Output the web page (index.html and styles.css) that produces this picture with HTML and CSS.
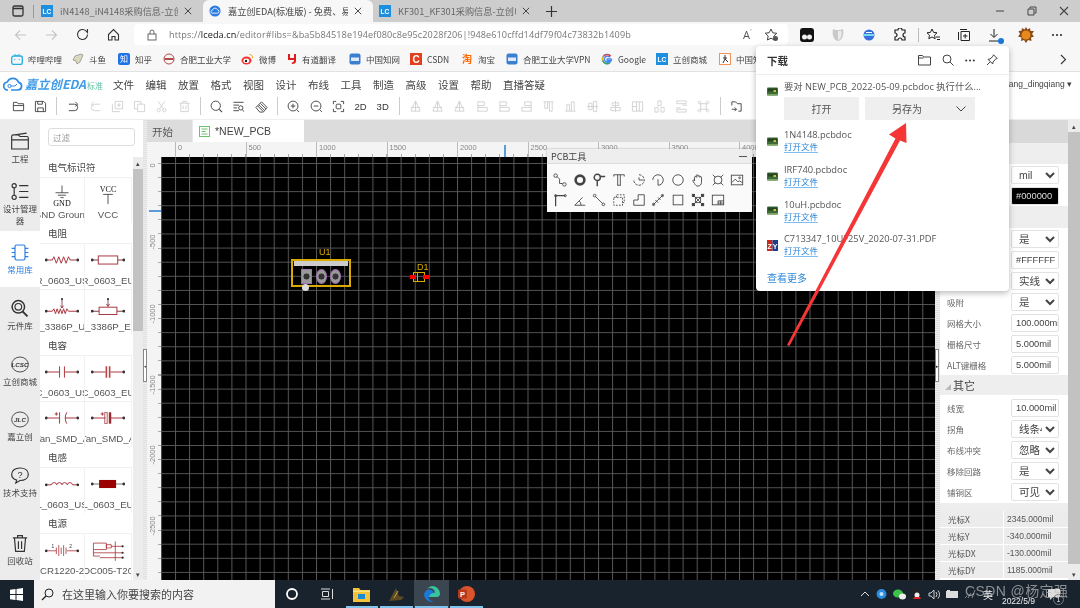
FILE: index.html
```html
<!DOCTYPE html>
<html lang="zh-CN">
<head>
<meta charset="utf-8">
<title>嘉立创EDA(标准版)</title>
<link rel="stylesheet" href="styles.css">
</head>
<body>
<svg class="defs" width="0" height="0" aria-hidden="true">
  <symbol id="i-close" viewBox="0 0 10 10"><path d="M1 1l8 8M9 1l-8 8" fill="none" stroke="currentColor" stroke-width="1.1"/></symbol>
  <symbol id="i-lc" viewBox="0 0 12 12"><rect width="12" height="12" fill="#1e8fe0"/><text x="6" y="8.6" font-size="6.6" font-weight="700" text-anchor="middle" fill="#fff" font-family="Liberation Sans">LC</text></symbol>
  <symbol id="i-cnki" viewBox="0 0 12 12"><rect x="0.5" y="0.5" width="11" height="11" rx="2" fill="#3b7fd0"/><rect x="2" y="4.5" width="8" height="3.5" fill="#dfeafa"/></symbol>
  <symbol id="i-pcb" viewBox="0 0 11 11"><rect y="1.5" width="11" height="8" rx="1" fill="#3d6b3a"/><rect x="1" y="2.5" width="9" height="3" fill="#23451f"/><rect x="6.5" y="4" width="2.5" height="2" fill="#d8b93a"/><rect y="8" width="11" height="1.5" fill="#7ba35f"/></symbol>
  <symbol id="b-open" viewBox="0 0 14 14"><path d="M1.5 11.5v-9h4l1 1.5h6v7.5zM1.5 6h11" fill="none" stroke="currentColor"/></symbol>
  <symbol id="b-save" viewBox="0 0 14 14"><path d="M1.5 1.5h9l2 2v9h-11zM4 1.5v3h5v-3M4 12.5v-4h6v4" fill="none" stroke="currentColor"/></symbol>
  <symbol id="b-undo" viewBox="0 0 14 14"><path d="M12 11.5H6a3.5 3.5 0 0 1 0-7h6M2.5 4.500L5 2M2.5 4.500L5 7" fill="none" stroke="currentColor" transform="matrix(-1 0 0 1 14 0)"/></symbol>
  <symbol id="b-redo" viewBox="0 0 14 14"><path d="M12 11.5H6a3.5 3.5 0 0 1 0-7h6M2.5 4.500L5 2M2.5 4.500L5 7" fill="none" stroke="currentColor"/></symbol>
  <symbol id="b-copy" viewBox="0 0 14 14"><path d="M4.5 1.5h8v8h-8zM1.5 4.5v8h8M8.5 3.5v4M6.5 5.5h4" fill="none" stroke="currentColor"/></symbol>
  <symbol id="b-paste" viewBox="0 0 14 14"><path d="M1.5 1.5h7v3M1.5 1.5v8h3M5 4.5h7.5v8H5z" fill="none" stroke="currentColor"/></symbol>
  <symbol id="b-cut" viewBox="0 0 14 14"><circle cx="4" cy="11" r="1.8" fill="none" stroke="currentColor"/><circle cx="10" cy="11" r="1.8" fill="none" stroke="currentColor"/><path d="M5 9.5L10.5 1.5M9 9.5L3.5 1.5" fill="none" stroke="currentColor"/></symbol>
  <symbol id="b-trash" viewBox="0 0 14 14"><path d="M1.5 3.5h11M5 3.5v-2h4v2M3 3.5v9h8v-9M5.5 6v4M8.5 6v4" fill="none" stroke="currentColor"/></symbol>
  <symbol id="b-search" viewBox="0 0 14 14"><circle cx="6.2" cy="6.2" r="5" fill="none" stroke="currentColor"/><path d="M10 10l3 3" stroke="currentColor" stroke-width="1.2"/></symbol>
  <symbol id="b-find" viewBox="0 0 14 14"><path d="M1.5 2.5h11M1.5 5.5h6M1.5 8.5h4M1.5 11.5h6" stroke="currentColor"/><circle cx="9.5" cy="8.5" r="2.3" fill="none" stroke="currentColor"/><path d="M11 10.5l2 2" stroke="currentColor"/></symbol>
  <symbol id="b-erase" viewBox="0 0 14 14"><path d="M1 8l6-6 6 6-4 5H5zM4 5l6 6M6 3.8l6 6M2.8 6.300l6 6" fill="none" stroke="currentColor"/></symbol>
  <symbol id="b-zin" viewBox="0 0 14 14"><circle cx="6.5" cy="6.5" r="5.3" fill="none" stroke="currentColor"/><path d="M10.5 10.5l2.5 2.5M4 6.5h5M6.5 4v5" stroke="currentColor"/></symbol>
  <symbol id="b-zout" viewBox="0 0 14 14"><circle cx="6.5" cy="6.5" r="5.3" fill="none" stroke="currentColor"/><path d="M10.5 10.5l2.5 2.5M4 6.5h5" stroke="currentColor"/></symbol>
  <symbol id="b-fit" viewBox="0 0 14 14"><path d="M1.5 4.5v-3h3M9.5 1.5h3v3M12.5 9.5v3h-3M4.5 12.5h-3v-3" fill="none" stroke="currentColor"/><rect x="4.5" y="4.5" width="5" height="5" rx="1" fill="none" stroke="currentColor"/></symbol>
  <symbol id="b-a1" viewBox="0 0 14 14"><path d="M7 1L2 12h10zM2 8h10M7 1v11" fill="none" stroke="currentColor"/></symbol>
  <symbol id="b-a2" viewBox="0 0 14 14"><path d="M2 1.5v11M2 2h7v4H2M2 8h10v4H2" fill="none" stroke="currentColor"/></symbol>
  <symbol id="b-a3" viewBox="0 0 14 14"><path d="M12 1.5v11M12 2H5v4h7M12 8H2v4h10" fill="none" stroke="currentColor"/></symbol>
  <symbol id="b-a4" viewBox="0 0 14 14"><path d="M1.5 2h11M3 2v7h3V2M8 2v10h3V2" fill="none" stroke="currentColor"/></symbol>
  <symbol id="b-a5" viewBox="0 0 14 14"><path d="M1.5 12h11M3 12V5h3v7M8 12V2h3v10" fill="none" stroke="currentColor"/></symbol>
  <symbol id="b-a6" viewBox="0 0 14 14"><path d="M1 7h12M3 3.500h3.500v7H3zM8 1.500h3.500v11H8z" fill="none" stroke="currentColor"/></symbol>
  <symbol id="b-a7" viewBox="0 0 14 14"><path d="M7 1v12M3.500 3h7v3h-7zM2 8h10v3.500H2z" fill="none" stroke="currentColor"/></symbol>
  <symbol id="b-a8" viewBox="0 0 14 14"><path d="M1.500 2h11v10h-11zM6 2v10M1.500 7H6M9 2v10" fill="none" stroke="currentColor"/></symbol>
  <symbol id="b-a9" viewBox="0 0 14 14"><path d="M2 8h3.500v5H2zM8.500 8H12v5H8.500zM5.200 1h3.500v5H5.200z" fill="none" stroke="currentColor"/></symbol>
  <symbol id="b-a10" viewBox="0 0 14 14"><path d="M2 1h10v3H2zM2 10h10v3H2zM8 5.500h5M1 8.500h5" fill="none" stroke="currentColor"/></symbol>
  <symbol id="b-a11" viewBox="0 0 14 14"><path d="M4 4h6v6H4zM4 4H2a1.500 1.500 0 1 1 2-2zM10 4V2a1.500 1.500 0 1 1 2 2zM4 10v2a1.500 1.500 0 1 1-2-2zM10 10h2a1.500 1.500 0 1 1-2 2z" fill="none" stroke="currentColor"/></symbol>
  <symbol id="b-a12" viewBox="0 0 14 14"><path d="M2 6V2h4l2 2h4v8H9M2 10h5M7 10l-2-2M7 10l-2 2" fill="none" stroke="currentColor"/></symbol>
  <symbol id="s-res" viewBox="0 0 42 14"><path d="M0 7h9l2-4 3 8 3-8 3 8 3-8 3 8 3-8 2 4h11" fill="none" stroke="#a8343c" stroke-width="1.200"/><circle cx="1.500" cy="7" r="1.700" fill="#333"/><circle cx="40.500" cy="7" r="1.700" fill="#333"/></symbol>
  <symbol id="s-rbox" viewBox="0 0 42 14"><path d="M0 7h9M33 7h9" stroke="#7a3a3e" stroke-width="1.200"/><rect x="9" y="2" width="24" height="10" fill="none" stroke="#a8343c" stroke-width="1.200"/><circle cx="1.500" cy="7" r="1.700" fill="#333"/><circle cx="40.500" cy="7" r="1.700" fill="#333"/></symbol>
</svg>

<div class="screen">
  <div class="tabstrip">
    <span class="strip-btn"><svg width="12" height="12" viewBox="0 0 12 12"><path d="M1 2.500A1.500 1.500 0 0 1 2.500 1h7A1.500 1.500 0 0 1 11 2.500v7A1.500 1.500 0 0 1 9.500 11h-7A1.500 1.500 0 0 1 1 9.500zM1 3.500h10" fill="none" stroke="#333" stroke-width="1.300"/></svg></span>
    <span class="strip-sep"></span>
    <div class="btab"><svg class="fav"><use href="#i-lc"/></svg><span class="btab-t">iN4148_iN4148采购信息-立创电子</span><svg class="x"><use href="#i-close"/></svg></div>
    <div class="btab active"><svg class="fav" viewBox="0 0 14 14"><circle cx="7" cy="7" r="6.500" fill="#2c7be5"/><path d="M3.500 9.500h6a2 2 0 0 0 .3-4 3 3 0 0 0-5.700.5 1.800 1.800 0 0 0-.6 3.500z" fill="none" stroke="#fff"/></svg><span class="btab-t">嘉立创EDA(标准版) - 免费、易用</span><svg class="x"><use href="#i-close"/></svg></div>
    <div class="btab"><svg class="fav"><use href="#i-lc"/></svg><span class="btab-t">KF301_KF301采购信息-立创电子</span><svg class="x"><use href="#i-close"/></svg></div>
    <svg class="plus" width="11" height="11" viewBox="0 0 11 11"><path d="M5.500 0v11M0 5.500h11" stroke="#333" stroke-width="1.200"/></svg>
    <div class="winctl">
      <svg width="10" height="10" viewBox="0 0 10 10"><path d="M1 5h8" stroke="#444"/></svg>
      <svg width="10" height="10" viewBox="0 0 10 10"><path d="M3 2.500V1h6v6H7.500M1 3h6v6H1z" fill="none" stroke="#444"/></svg>
      <svg width="10" height="10" viewBox="0 0 10 10"><use href="#i-close" color="#444"/></svg>
    </div>
  </div>

  <div class="addr">
    <div class="nav-ic">
      <svg width="13" height="12" viewBox="0 0 13 12"><path d="M12 6H1.500M6 1.500L1.500 6 6 10.500" fill="none" stroke="#c4c4c4" stroke-width="1.100"/></svg>
      <svg width="13" height="12" viewBox="0 0 13 12"><path d="M1 6h10.500M7 1.500L11.500 6 7 10.500" fill="none" stroke="#c4c4c4" stroke-width="1.100"/></svg>
      <svg width="13" height="13" viewBox="0 0 13 13"><path d="M11.500 6.500a5 5 0 1 1-1.500-3.600L11.500 4.500V1" fill="none" stroke="#333" stroke-width="1.100"/></svg>
      <svg width="13" height="13" viewBox="0 0 13 13"><path d="M1.500 6.500L6.500 1.500l5 5v5.500H8V8.500H5V12H1.500z" fill="none" stroke="#333" stroke-width="1.100"/></svg>
    </div>
    <div class="url">
      <svg width="10" height="12" viewBox="0 0 10 12"><rect x="1" y="5" width="8" height="6" fill="none" stroke="#666"/><path d="M3 5V3a2 2 0 0 1 4 0v2" fill="none" stroke="#666"/></svg>
      <span class="url-t"><span class="url-dim">https://</span>lceda.cn<span class="url-dim">/editor#libs=&amp;ba5b84518e194ef080c8e95c2028f206|!948e610cffd14df79f04c73832b1409b</span></span>
      <span class="url-a">A<sup>ﾟ</sup></span>
      <svg width="15" height="14" viewBox="0 0 15 14"><path d="M7 1l1.800 3.800 4 .5-3 2.800.8 4L7 10.200 3.400 12l.8-4-3-2.800 4-.5z" fill="none" stroke="#444"/><circle cx="11.500" cy="10.500" r="2.500" fill="#555"/></svg>
    </div>
    <div class="ext">
      <svg width="14" height="14" viewBox="0 0 14 14"><rect width="14" height="14" rx="3" fill="#111"/><circle cx="4.500" cy="9" r="2.500" fill="#eee"/><circle cx="9.500" cy="9" r="2.500" fill="#eee"/></svg>
      <svg width="14" height="14" viewBox="0 0 14 14"><path d="M2 1c2 1 3 1 5 1s3 0 5-1c1 5 0 11-5 12C2 12 1 6 2 1z" fill="#c9c9c9"/><path d="M7 3v9c3-1 4-5 3.500-9z" fill="#ececec"/></svg>
      <svg width="14" height="14" viewBox="0 0 14 14"><circle cx="7" cy="7" r="5.500" fill="#3a6fe0"/><path d="M2 7h10" stroke="#8fe" stroke-width="1.500"/><path d="M4 4.500h6" stroke="#fff"/></svg>
      <svg width="14" height="14" viewBox="0 0 14 14"><path d="M5 2a2 2 0 0 1 4 0h3v3a2 2 0 0 0 0 4v3H9a2 2 0 0 0-4 0H2V9a2 2 0 0 0 0-4V2z" fill="none" stroke="#222" stroke-width="1.200"/></svg>
      <span class="ext-sep"></span>
      <svg width="14" height="14" viewBox="0 0 14 14"><path d="M6 1l1.600 3.400 3.400.4-2.500 2.400.7 3.500L6 9l-3.200 1.700.7-3.500L1 4.800l3.400-.4zM10 9h4M11 11.500h3" fill="none" stroke="#222"/></svg>
      <svg width="14" height="14" viewBox="0 0 14 14"><path d="M3 1.500h7M1.500 4v8M4 3.500h8.500v9H4zM8.200 6v4.500M6 8h4.500" fill="none" stroke="#222"/></svg>
      <span class="dl"><svg width="13" height="14" viewBox="0 0 13 14"><path d="M6 1v8M2.500 6L6 9.500 9.500 6M1 13h10" fill="none" stroke="#222"/></svg><i class="dl-badge"></i></span>
      <svg width="16" height="16" viewBox="0 0 16 16"><path d="M8 0l1.500 2.500L12 1l.5 3L16 4l-2 3 2 2.500-3 1L13.500 14 10 13l-2 3-2-3-3 1 .5-3.500L0 9.500 2 7 .5 4l3-.200L4 1l2.500 1.500z" fill="#8a4a16"/><circle cx="8" cy="8" r="4.500" fill="#e8891e"/></svg>
      <svg width="12" height="4" viewBox="0 0 12 4"><circle cx="2" cy="2" r="1" fill="#222"/><circle cx="6" cy="2" r="1" fill="#222"/><circle cx="10" cy="2" r="1" fill="#222"/></svg>
    </div>
  </div>

  <div class="bookmarks">
    <div class="bm bm1"><svg width="12" height="11" viewBox="0 0 12 11"><rect x="0.700" y="2" width="10.600" height="8.500" rx="2" fill="none" stroke="#23ade5" stroke-width="1.300"/><path d="M3.500 0l2 2M8.500 0l-2 2M3.800 5v1M8.200 5v1" stroke="#23ade5"/></svg>哔哩哔哩</div>
    <div class="bm bm2"><svg width="12" height="12" viewBox="0 0 12 12"><path d="M9 1L3 3 1 7l3 1 1 3 3-2 3-7z" fill="#d9d9c0" stroke="#777" stroke-width=".6"/></svg>斗鱼</div>
    <div class="bm bm3"><svg width="12" height="12" viewBox="0 0 12 12"><rect width="12" height="12" rx="2" fill="#1e73e8"/><text x="6" y="9.300" font-size="8" text-anchor="middle" fill="#fff" font-family="Noto Sans CJK SC">知</text></svg>知乎</div>
    <div class="bm bm4"><svg width="12" height="12" viewBox="0 0 12 12"><circle cx="6" cy="6" r="5" fill="none" stroke="#b24a4a"/><path d="M1.500 5h9v2h-9z" fill="#b24a4a"/></svg>合肥工业大学</div>
    <div class="bm bm5"><svg width="13" height="12" viewBox="0 0 13 12"><ellipse cx="5.500" cy="7.500" rx="5" ry="4" fill="#e33"/><ellipse cx="5.300" cy="7.800" rx="3" ry="2.300" fill="#fff"/><circle cx="5" cy="8" r="1.200" fill="#222"/><path d="M8.500 1.500a3 3 0 0 1 3 3.500" fill="none" stroke="#f90"/></svg>微博</div>
    <div class="bm bm6"><svg width="10" height="12" viewBox="0 0 10 12"><path d="M1 1h2v4h4V1h2v7c0 2-1 3-4 3l-.5-1.500C6 9.500 7 9 7 7H1z" fill="#e01b1b"/></svg>有道翻译</div>
    <div class="bm bm7"><svg width="12" height="12"><use href="#i-cnki"/></svg>中国知网</div>
    <div class="bm bm8"><svg width="12" height="12" viewBox="0 0 12 12"><rect width="12" height="12" fill="#e33e1e"/><text x="6" y="10" font-size="10" font-weight="700" text-anchor="middle" fill="#fff" font-family="Liberation Sans">C</text></svg>CSDN</div>
    <div class="bm bm9"><svg width="12" height="12" viewBox="0 0 12 12"><text x="6" y="10" font-size="10" font-weight="700" text-anchor="middle" fill="#f60" font-family="Noto Sans CJK SC">淘</text></svg>淘宝</div>
    <div class="bm bm10"><svg width="12" height="12"><use href="#i-cnki"/></svg>合肥工业大学VPN</div>
    <div class="bm bm11"><svg width="12" height="12" viewBox="0 0 12 12"><path d="M10.500 6H6.200v1.700h2.500A2.900 2.900 0 1 1 8 3.800l1.200-1.200A4.600 4.600 0 1 0 10.600 6" fill="none" stroke="#4285f4" stroke-width="1.300"/><path d="M2.500 3.500A4.600 4.600 0 0 1 9.200 2.600L8 3.800" fill="none" stroke="#ea4335" stroke-width="1.300"/><path d="M1.700 7.500A4.600 4.600 0 0 1 2.500 3.500" fill="none" stroke="#fbbc05" stroke-width="1.300"/><path d="M1.700 7.500A4.600 4.600 0 0 0 9 9.700" fill="none" stroke="#34a853" stroke-width="1.300"/></svg>Google</div>
    <div class="bm bm12"><svg width="12" height="12"><use href="#i-lc"/></svg>立创商城</div>
    <div class="bm bm13"><svg width="12" height="12" viewBox="0 0 12 12"><rect x=".5" y=".5" width="11" height="11" fill="#fff" stroke="#f0945a"/><path d="M6 2v4l-2 4M6 6l3 3M4 5h4" fill="none" stroke="#333"/></svg>中国知网</div>
    <svg class="bm-more" width="7" height="11" viewBox="0 0 7 11"><path d="M1 1l4.500 4.500L1 10" fill="none" stroke="#333" stroke-width="1.100"/></svg>
  </div>

  <div class="menubar">
    <svg class="logo" width="20" height="14" viewBox="0 0 20 14"><path d="M5 13a4 4 0 0 1-.6-8A6 6 0 0 1 15.500 5.300 3.900 3.900 0 0 1 15 13H8" fill="none" stroke="#2f8ae6" stroke-width="1.700"/><circle cx="6.500" cy="9" r="1.600" fill="none" stroke="#2f8ae6"/><path d="M8 9h4l2-2" fill="none" stroke="#2f8ae6"/></svg>
    <span class="brand">嘉立创EDA</span><span class="brand-sub">标准</span>
    <nav class="menus"><span>文件</span><span>编辑</span><span>放置</span><span>格式</span><span>视图</span><span>设计</span><span>布线</span><span>工具</span><span>制造</span><span>高级</span><span>设置</span><span>帮助</span><span>直播答疑</span></nav>
    <span class="user">yang_dingqiang ▾</span>
  </div>

  <div class="toolbar">
    <svg><use href="#b-open"/></svg><svg><use href="#b-save"/></svg><i class="tsep"></i>
    <svg><use href="#b-undo"/></svg><svg class="off"><use href="#b-redo"/></svg><svg class="off"><use href="#b-copy"/></svg><svg class="off"><use href="#b-paste"/></svg><svg class="off"><use href="#b-cut"/></svg><svg class="off"><use href="#b-trash"/></svg><i class="tsep"></i>
    <svg><use href="#b-search"/></svg><svg><use href="#b-find"/></svg><svg><use href="#b-erase"/></svg><i class="tsep"></i>
    <svg><use href="#b-zin"/></svg><svg><use href="#b-zout"/></svg><svg><use href="#b-fit"/></svg><span class="t2d">2D</span><span class="t2d">3D</span><i class="tsep"></i>
    <svg class="off"><use href="#b-a1"/></svg><svg class="off"><use href="#b-a1"/></svg><svg class="off"><use href="#b-a1"/></svg><svg class="off"><use href="#b-a2"/></svg><svg class="off"><use href="#b-a2"/></svg><svg class="off"><use href="#b-a3"/></svg><svg class="off"><use href="#b-a4"/></svg><svg class="off"><use href="#b-a5"/></svg><svg class="off"><use href="#b-a6"/></svg><svg class="off"><use href="#b-a7"/></svg><svg class="off"><use href="#b-a8"/></svg><svg class="off"><use href="#b-a9"/></svg><svg class="off"><use href="#b-a10"/></svg><svg class="off"><use href="#b-a11"/></svg><i class="tsep"></i>
    <svg><use href="#b-a12"/></svg>
  </div>

  <div class="main">
    <aside class="leftnav">
      <div class="ln"><svg viewBox="0 0 24 22"><path d="M2 20V5a2 2 0 0 1 2-2h6l2 2h8a2 2 0 0 1 2 2v13zM2 9h20M6 3l14-2" fill="none" stroke="#333" stroke-width="1.400"/></svg><span>工程</span></div>
      <div class="ln"><svg viewBox="0 0 24 22"><circle cx="5" cy="4" r="2.500" fill="none" stroke="#333" stroke-width="1.400"/><circle cx="5" cy="18" r="2.500" fill="none" stroke="#333" stroke-width="1.400"/><path d="M5 6.500v9M11 4h11M11 11h11M11 18h11" stroke="#333" stroke-width="1.400"/></svg><span>设计管理器</span></div>
      <div class="ln on"><svg viewBox="0 0 24 22"><rect x="6" y="2" width="12" height="18" rx="2" fill="none" stroke="#2a7de1" stroke-width="1.400"/><path d="M2 6h4M2 11h4M2 16h4M18 6h4M18 11h4M18 16h4" stroke="#2a7de1" stroke-width="1.400"/></svg><span>常用库</span></div>
      <div class="ln"><svg viewBox="0 0 24 22"><circle cx="10" cy="9" r="7.500" fill="none" stroke="#333" stroke-width="1.800"/><circle cx="10" cy="9" r="4" fill="none" stroke="#333" stroke-width="1.400"/><path d="M15 14.500l6 6" stroke="#333" stroke-width="2.400"/></svg><span>元件库</span></div>
      <div class="ln"><svg viewBox="0 0 24 22"><ellipse cx="12" cy="11" rx="10" ry="9" fill="none" stroke="#333"/><text x="12" y="14" font-size="7.500" font-weight="700" font-style="italic" text-anchor="middle" fill="#333" font-family="Liberation Sans">LCSC</text></svg><span>立创商城</span></div>
      <div class="ln"><svg viewBox="0 0 24 22"><ellipse cx="12" cy="11" rx="10" ry="9" fill="none" stroke="#333"/><text x="12" y="14" font-size="7.500" font-weight="700" font-style="italic" text-anchor="middle" fill="#333" font-family="Liberation Sans">JLC</text></svg><span>嘉立创</span></div>
      <div class="ln"><svg viewBox="0 0 24 22"><path d="M12 2c6 0 10 3 10 7.500S18 17 12 17l-5 3 1-3.600C4 15.500 2 13 2 9.500 2 5 6 2 12 2z" fill="none" stroke="#333" stroke-width="1.400"/><text x="12" y="14" font-size="11" text-anchor="middle" fill="#333" font-family="Liberation Sans">?</text></svg><span>技术支持</span></div>
      <div class="ln ln-trash"><svg viewBox="0 0 24 24"><path d="M3 5h18M9 5V2h6v3M5 5l1.500 17h11L19 5M10 9v10M14 9v10" fill="none" stroke="#333" stroke-width="1.500"/></svg><span>回收站</span></div>
    </aside>

    <section class="lib">
      <div class="filter-wrap"><input class="filter" placeholder="过滤"></div>
      <div class="lib-body">
        <div class="lib-list">
          <h4>电气标识符</h4>
          <div class="cells">
            <div class="cell"><svg class="sym-tall" viewBox="0 0 42 26"><path d="M21 0v9M13 9h16M16 12h10M19 15h4" stroke="#333" fill="none"/><text x="21" y="25" font-size="10" text-anchor="middle" font-family="Liberation Serif" fill="#111">GND</text></svg><span>GND Ground</span></div>
            <div class="cell"><svg class="sym-tall" viewBox="0 0 42 26"><text x="21" y="8" font-size="10" text-anchor="middle" font-family="Liberation Serif" fill="#111">VCC</text><path d="M15 11h12M21 11v12" stroke="#333" fill="none"/></svg><span>VCC</span></div>
          </div>
          <h4>电阻</h4>
          <div class="cells">
            <div class="cell"><svg class="sym"><use href="#s-res"/></svg><span>R_0603_US</span></div>
            <div class="cell"><svg class="sym"><use href="#s-rbox"/></svg><span>R_0603_EU</span></div>
            <div class="cell"><svg class="sym-tall" viewBox="0 0 42 26"><path d="M21 2v11M19 10l2 3 2-3" fill="none" stroke="#7a2a2e"/><circle cx="21" cy="2" r="1.300" fill="#333"/><path d="M0 17h9l2-3 2 6 2-6 2 6 2-6 2 6 2-6 2 6 2-6 2 3h11" fill="none" stroke="#a8343c" stroke-width="1.200"/><circle cx="1.500" cy="17" r="1.700" fill="#333"/><circle cx="40.500" cy="17" r="1.700" fill="#333"/></svg><span>R_3386P_US</span></div>
            <div class="cell"><svg class="sym-tall" viewBox="0 0 42 26"><path d="M21 2v9M19 8l2 3 2-3" fill="none" stroke="#7a2a2e"/><circle cx="21" cy="2" r="1.300" fill="#333"/><path d="M0 17h10M32 17h10" stroke="#7a3a3e" stroke-width="1.200"/><rect x="10" y="12" width="22" height="9" fill="none" stroke="#a8343c" stroke-width="1.200"/><circle cx="1.500" cy="17" r="1.700" fill="#333"/><circle cx="40.500" cy="17" r="1.700" fill="#333"/></svg><span>R_3386P_EU</span></div>
          </div>
          <h4>电容</h4>
          <div class="cells">
            <div class="cell"><svg class="sym" viewBox="0 0 42 14"><path d="M0 7h18M24 7h18M18 0v14M24 0v14" stroke="#a8343c" stroke-width="1.200" fill="none"/><circle cx="1.500" cy="7" r="1.700" fill="#333"/><circle cx="40.500" cy="7" r="1.700" fill="#333"/></svg><span>C_0603_US</span></div>
            <div class="cell"><svg class="sym" viewBox="0 0 42 14"><path d="M0 7h18M24 7h18" stroke="#a8343c" stroke-width="1.200"/><path d="M18 0h2v14h-2zM24 0h-2v14h2z" fill="#b5454a"/><circle cx="1.500" cy="7" r="1.700" fill="#333"/><circle cx="40.500" cy="7" r="1.700" fill="#333"/></svg><span>C_0603_EU</span></div>
            <div class="cell"><svg class="sym" viewBox="0 0 42 14"><path d="M0 7h18M25 7h17M18 0v14M27 0a12 12 0 0 0-2 7 12 12 0 0 0 2 7M12 2h4M14 0v4" stroke="#a8343c" stroke-width="1.200" fill="none"/><circle cx="1.500" cy="7" r="1.700" fill="#333"/><circle cx="40.500" cy="7" r="1.700" fill="#333"/></svg><span>Tan_SMD_A</span></div>
            <div class="cell"><svg class="sym" viewBox="0 0 42 14"><path d="M0 7h18M24 7h18M12 2h4M14 0v4" stroke="#a8343c" stroke-width="1.200" fill="none"/><path d="M17 0h3v14h-3z" fill="none" stroke="#a8343c"/><path d="M22 0h3v14h-3z" fill="#9a2a30"/><circle cx="1.500" cy="7" r="1.700" fill="#333"/><circle cx="40.500" cy="7" r="1.700" fill="#333"/></svg><span>Tan_SMD_A</span></div>
          </div>
          <h4>电感</h4>
          <div class="cells">
            <div class="cell"><svg class="sym" viewBox="0 0 42 14"><path d="M0 8h8a3.300 3.300 0 0 1 6.500 0 3.300 3.300 0 0 1 6.500 0 3.300 3.300 0 0 1 6.500 0 3.300 3.300 0 0 1 6.500 0h8" fill="none" stroke="#a8343c" stroke-width="1.200"/><circle cx="1.500" cy="8" r="1.700" fill="#333"/><circle cx="40.500" cy="8" r="1.700" fill="#333"/></svg><span>L_0603_US</span></div>
            <div class="cell"><svg class="sym" viewBox="0 0 42 14"><path d="M0 7h42" stroke="#555"/><rect x="10" y="2" width="21" height="10" fill="#9a0000"/><circle cx="1.500" cy="7" r="1.700" fill="#333"/><circle cx="40.500" cy="7" r="1.700" fill="#333"/></svg><span>L_0603_EU</span></div>
          </div>
          <h4>电源</h4>
          <div class="cells">
            <div class="cell"><svg class="sym" viewBox="0 0 42 14"><path d="M0 8h14M27 8h15M14 4v8M17 1v14M20 4v8M23 1v14M26 4v8" stroke="#a8343c" fill="none"/><text x="8" y="5" font-size="6" fill="#333" font-family="Liberation Sans">1</text><text x="30" y="5" font-size="6" fill="#333" font-family="Liberation Sans">2</text><circle cx="1.500" cy="8" r="1.700" fill="#333"/><circle cx="40.500" cy="8" r="1.700" fill="#333"/></svg><span>CR1220-2</span></div>
            <div class="cell"><svg class="sym-tall" viewBox="0 0 42 26"><path d="M3 2h16v8H3zM19 4h6v4h-6zM3 14h12M3 18h8M3 10v8M25 6h15M15 14h25M11 20h29M30 0v24" fill="none" stroke="#a8343c"/><circle cx="39" cy="6" r="1.300" fill="#333"/><circle cx="39" cy="14" r="1.300" fill="#333"/><circle cx="39" cy="20" r="1.300" fill="#333"/></svg><span>DC005-T20</span></div>
          </div>
        </div>
        <div class="sbar lib-sb"><b class="sb-up">▴</b><i class="sb-thumb lib-thumb"></i><b class="sb-dn">▾</b></div>
      </div>
    </section>

    <div class="gutter"><i class="handle">◂</i></div>

    <section class="center">
      <div class="doc-tabs">
        <span class="dt">开始</span>
        <span class="dt dt-on"><svg width="11" height="11" viewBox="0 0 11 11"><rect x=".5" y=".5" width="10" height="10" fill="none" stroke="#6cc26c"/><path d="M2.500 3h6M2.500 5.500h4M2.500 8h6" stroke="#6cc26c"/></svg>*NEW_PCB</span>
      </div>
      <div class="ruler-top">
        <span>0</span><span>500</span><span>1000</span><span>1500</span><span>2000</span><span>2500</span><span>3000</span><span>3500</span><span>4000</span><span>4500</span><span>5000</span>
        <i class="mark-x"></i>
      </div>
      <div class="canvas-row">
        <div class="ruler-left">
          <span>0</span><span>-500</span><span>-1000</span><span>-1500</span><span>-2000</span><span>-2500</span>
          <i class="mark-y"></i>
        </div>
        <div class="canvas">
          <svg class="grid" width="100%" height="100%">
            <defs><pattern id="gridp" x="14" y="6" width="14.1" height="14.1" patternUnits="userSpaceOnUse"><path d="M.5 0v14.100M0 .5h14.100" stroke="#fff" stroke-opacity=".34" fill="none"/></pattern></defs>
            <rect width="100%" height="100%" fill="url(#gridp)"/>
          </svg>
          <div class="fp u1">
            <span class="ref">U1</span>
            <i class="u1-bar"></i>
            <i class="pad sq p1"></i><i class="pad p2"></i><i class="pad p3"></i>
            <i class="u1-dot"></i>
          </div>
          <div class="fp d1">
            <span class="ref">D1</span>
            <i class="d1-pad dl1"></i><i class="d1-pad dl2"></i><i class="d1-band"></i>
          </div>
        </div>
      </div>
    </section>

    <div class="gutter gutter-r"><i class="handle">▸</i></div>

    <aside class="props">
      <div class="props-body">
        <div class="band band-top"></div>
        <div class="band band-title">画布</div>
        <div class="row"><label>单位</label><select class="ctl"><option>mil</option></select></div>
        <div class="row"><label>背景色</label><input class="ctl black" value="#000000"></div>
        <div class="band band-title band-grid">网格</div>
        <div class="row"><label>可见</label><select class="ctl"><option>是</option></select></div>
        <div class="row"><label>颜色</label><input class="ctl" value="#FFFFFF"></div>
        <div class="row"><label>样式</label><select class="ctl"><option>实线</option></select></div>
        <div class="row"><label>吸附</label><select class="ctl"><option>是</option></select></div>
        <div class="row"><label>网格大小</label><input class="ctl" value="100.000mil"></div>
        <div class="row"><label>栅格尺寸</label><input class="ctl" value="5.000mil"></div>
        <div class="row"><label>ALT键栅格</label><input class="ctl" value="5.000mil"></div>
        <div class="band band-sec"><em>◢</em>其它</div>
        <div class="row"><label>线宽</label><input class="ctl" value="10.000mil"></div>
        <div class="row"><label>拐角</label><select class="ctl"><option>线条45</option></select></div>
        <div class="row"><label>布线冲突</label><select class="ctl"><option>忽略</option></select></div>
        <div class="row"><label>移除回路</label><select class="ctl"><option>是</option></select></div>
        <div class="row"><label>铺铜区</label><select class="ctl"><option>可见</option></select></div>
        <div class="band band-thin"></div>
        <div class="coords">
          <span>光标X</span><span>2345.000mil</span>
          <span>光标Y</span><span>-340.000mil</span>
          <span>光标DX</span><span>-130.000mil</span>
          <span>光标DY</span><span>1185.000mil</span>
        </div>
      </div>
      <div class="sbar props-sb"><b class="sb-up">▴</b><i class="sb-thumb props-thumb"></i><b class="sb-dn">▾</b></div>
    </aside>
  </div>

  <footer class="taskbar">
    <svg class="win" width="13" height="13" viewBox="0 0 13 13"><path d="M0 1.800L5.500 1v5H0zM6.500.9L13 0v6H6.500zM0 7h5.500v5L0 11.200zM6.500 7H13v6l-6.500-.9z" fill="#fff"/></svg>
    <div class="tsearch"><svg width="13" height="13" viewBox="0 0 13 13"><circle cx="8" cy="5" r="4" fill="none" stroke="#222"/><path d="M5 8l-4 4" stroke="#222" stroke-width="1.200"/></svg><span>在这里输入你要搜索的内容</span></div>
    <div class="tb-apps">
      <span class="tb"><svg width="14" height="14" viewBox="0 0 14 14"><circle cx="7" cy="7" r="5" fill="none" stroke="#fff" stroke-width="1.800"/></svg></span>
      <span class="tb"><svg width="14" height="12" viewBox="0 0 14 12"><path d="M1 1h9M1 11h9M2.500 3.500h6v5h-6zM12.500 1v10" fill="none" stroke="#ddd"/></svg></span>
      <span class="tb run"><svg width="17" height="15" viewBox="0 0 17 15"><path d="M0 1h6l1.500 2H17v12H0z" fill="#f2c23c"/><rect x="5" y="7" width="7" height="5" fill="#1b8ad6"/><rect x="0" y="3.500" width="17" height="1.500" fill="#ffdf7e"/></svg></span>
      <span class="tb run"><svg width="17" height="15" viewBox="0 0 17 15"><path d="M1 14L8 1l3 8 5 1-3 3z" fill="#5b4a22"/><path d="M6 11l4-7" stroke="#c9a24a"/></svg></span>
      <span class="tb run active"><svg width="18" height="18" viewBox="0 0 18 18"><path d="M9 1a8 8 0 0 1 8 8c0 2-1.500 3-3.500 3H6c0-3 3-5 6-4a5 5 0 0 0-8-4A8 8 0 0 1 9 1z" fill="#35c6a0"/><path d="M1 9a8 8 0 0 0 10 7.700C8 16.500 5 14 6 11c.5-2 3-3 5-3-1-3-4-3.500-6.500-3.500A8 8 0 0 0 1 9z" fill="#1a78d8"/></svg></span>
      <span class="tb run"><svg width="18" height="18" viewBox="0 0 18 18"><circle cx="10" cy="9" r="8" fill="#d9542b"/><rect x="1" y="4.500" width="9" height="9" rx="1" fill="#b7381a"/><text x="5.500" y="12" font-size="7.500" font-weight="700" text-anchor="middle" fill="#fff" font-family="Liberation Sans">P</text></svg></span>
    </div>
    <div class="tray">
      <svg width="10" height="6" viewBox="0 0 10 6"><path d="M1 5l4-4 4 4" fill="none" stroke="#ddd"/></svg>
      <svg width="11" height="12" viewBox="0 0 11 12"><circle cx="5.500" cy="6" r="5" fill="#2a8ae0"/><circle cx="5.500" cy="6" r="2" fill="#bfe2ff"/></svg>
      <svg width="13" height="11" viewBox="0 0 13 11"><ellipse cx="5" cy="4.500" rx="5" ry="4" fill="#3cc14a"/><ellipse cx="9.500" cy="7.500" rx="3.500" ry="3" fill="#eee"/></svg>
      <svg width="10" height="12" viewBox="0 0 10 12"><ellipse cx="5" cy="5" rx="3.500" ry="4.500" fill="#222"/><ellipse cx="5" cy="7" rx="2.500" ry="2.500" fill="#eee"/><path d="M2 9h6l1 2H1z" fill="#d22"/></svg>
      <svg width="12" height="11" viewBox="0 0 12 11"><path d="M1 4h2l3-3v9L3 7H1zM8 3a4 4 0 0 1 0 5M10 1.500a6 6 0 0 1 0 8" fill="none" stroke="#ccc"/></svg>
      <svg width="12" height="9" viewBox="0 0 12 9"><rect y="1" width="12" height="7" fill="#ddd"/><rect x="1" width="3" height="1" fill="#ddd"/></svg>
      <svg width="12" height="10" viewBox="0 0 12 10"><path d="M1 9l2-2M4 9l3-5M8 9l3-8" stroke="#888"/></svg>
      <span class="tray-t">英</span>
      <span class="tray-date">2022/5/9</span>
      <span class="notif"><svg width="12" height="11" viewBox="0 0 12 11"><path d="M0 0h12v8H5L2 11V8H0z" fill="#ddd"/></svg><i>1</i></span>
    </div>
  </footer>

  <div class="pcbtools">
    <div class="pt-head"><span>PCB工具</span><i></i></div>
    <div class="pt-grid">
      <svg viewBox="0 0 16 16"><circle cx="3" cy="3" r="2"/><circle cx="13" cy="13" r="2"/><path d="M4.500 4l3 3v5h3.500"/></svg>
      <svg viewBox="0 0 16 16"><circle cx="8" cy="8" r="5" stroke-width="3"/></svg>
      <svg viewBox="0 0 16 16"><circle cx="6" cy="5" r="3.500" stroke-width="1.600"/><path d="M6 9v6M9.500 4H15" stroke-width="1.600"/></svg>
      <svg viewBox="0 0 16 16"><path d="M2 4V2h12v2M6 14h4M6.500 2v12M9.500 2v12"/></svg>
      <svg viewBox="0 0 16 16"><path d="M8 2a6 6 0 1 1-6 6" stroke-dasharray="3 1"/><path d="M8 8h5M8 8v-3"/></svg>
      <svg viewBox="0 0 16 16"><path d="M2 8a6 6 0 1 1 6 6M8 14V7"/></svg>
      <svg viewBox="0 0 16 16"><circle cx="8" cy="8" r="6"/></svg>
      <svg viewBox="0 0 16 16"><path d="M4 9V5a1 1 0 0 1 2 0V3a1 1 0 0 1 2 0v1a1 1 0 0 1 2 0v1a1 1 0 0 1 2 0v6c0 2-2 4-4 4s-3-1-4-3L2 9a1 1 0 0 1 2 0z"/></svg>
      <svg viewBox="0 0 16 16"><circle cx="8" cy="8" r="4.500"/><path d="M2 2l3 3M14 2l-3 3M2 14l3-3M14 14l-3-3"/></svg>
      <svg viewBox="0 0 16 16"><rect x="1.500" y="2.500" width="13" height="11"/><path d="M2 11l4-4 3 3 2-1 3 2"/><circle cx="11" cy="5.500" r="1"/></svg>
      <svg viewBox="0 0 16 16"><path d="M3 15V3h11" stroke-width="1.400"/><circle cx="3" cy="3" r="1.200"/><circle cx="14" cy="3" r="1.200"/></svg>
      <svg viewBox="0 0 16 16"><path d="M14 14H2L11 5M7 9a5 5 0 0 1 2 5"/></svg>
      <svg viewBox="0 0 16 16"><circle cx="3" cy="3" r="1.500"/><circle cx="13" cy="13" r="1.500"/><path d="M4 4l8 8"/></svg>
      <svg viewBox="0 0 16 16"><path d="M2 5h10v9H2zM5 5V2h9v9h-2" stroke-dasharray="2 1.500"/></svg>
      <svg viewBox="0 0 16 16"><path d="M2 14V8h5V2h7v12z"/></svg>
      <svg viewBox="0 0 16 16"><path d="M2 14l12-12M5 8l3 3M8 5l3 3"/><circle cx="3" cy="13" r="1.300"/><circle cx="13" cy="3" r="1.300"/></svg>
      <svg viewBox="0 0 16 16"><rect x="2.500" y="2.500" width="11" height="11"/></svg>
      <svg viewBox="0 0 16 16"><path d="M3 3l10 10M13 3L3 13"/><rect x="5" y="5" width="6" height="6"/><rect x="1.500" y="1.500" width="2.500" height="2.500" fill="#333"/><rect x="12" y="1.500" width="2.500" height="2.500" fill="#333"/><rect x="1.500" y="12" width="2.500" height="2.500" fill="#333"/><rect x="12" y="12" width="2.500" height="2.500" fill="#333"/></svg>
      <svg viewBox="0 0 16 16"><rect x="1.500" y="2.500" width="13" height="11"/><path d="M8 9h6.500M8 11.500h6.500M8 9v4.500M11 9v4.500"/></svg>
    </div>
  </div>

  <div class="downloads">
    <div class="dl-head">
      <strong>下载</strong>
      <svg width="13" height="12" viewBox="0 0 13 12"><path d="M.5 11V1.500h4l1.200 1.500h6.800v8zM.5 4h5" fill="none" stroke="#444"/></svg>
      <svg width="12" height="12" viewBox="0 0 12 12"><circle cx="5" cy="5" r="4" fill="none" stroke="#444"/><path d="M8 8l3.500 3.500" stroke="#444"/></svg>
      <svg width="10" height="3" viewBox="0 0 10 3"><circle cx="1.200" cy="1.500" r="1" fill="#333"/><circle cx="5" cy="1.500" r="1" fill="#333"/><circle cx="8.800" cy="1.500" r="1" fill="#333"/></svg>
      <svg width="12" height="12" viewBox="0 0 12 12"><path d="M7.500.8l3.700 3.700-1.500.5L7 8l-.3 2L2 5.300l2-.3 3-2.700zM4 8l-3 3" fill="none" stroke="#444"/></svg>
    </div>
    <div class="dl-list">
      <div class="dl-item dl-ask">
        <svg class="dl-ic"><use href="#i-pcb"/></svg>
        <div class="dl-txt">
          <div class="dl-name">要对 NEW_PCB_2022-05-09.pcbdoc 执行什么...</div>
          <div class="dl-btns"><button class="btn-open">打开</button><button class="btn-save"><span>另存为</span><svg width="10" height="6" viewBox="0 0 10 6"><path d="M.5.500L5 5 9.500.5" fill="none" stroke="#444"/></svg></button></div>
        </div>
      </div>
      <div class="dl-item"><svg class="dl-ic"><use href="#i-pcb"/></svg><div class="dl-txt"><div class="dl-name">1N4148.pcbdoc</div><a class="dl-link">打开文件</a></div></div>
      <div class="dl-item"><svg class="dl-ic"><use href="#i-pcb"/></svg><div class="dl-txt"><div class="dl-name">IRF740.pcbdoc</div><a class="dl-link">打开文件</a></div></div>
      <div class="dl-item"><svg class="dl-ic"><use href="#i-pcb"/></svg><div class="dl-txt"><div class="dl-name">10uH.pcbdoc</div><a class="dl-link">打开文件</a></div></div>
      <div class="dl-item"><svg class="dl-ic" viewBox="0 0 11 11"><rect width="5.500" height="11" fill="#c8281e"/><rect x="5.500" width="5.500" height="11" fill="#1c3f8a"/><text x="2.700" y="8.500" font-size="7" font-weight="700" text-anchor="middle" fill="#fff" font-family="Liberation Sans">Z</text><text x="8.200" y="8.500" font-size="7" font-weight="700" text-anchor="middle" fill="#fff" font-family="Liberation Sans">Y</text></svg><div class="dl-txt"><div class="dl-name">C713347_10UF25V_2020-07-31.PDF</div><a class="dl-link">打开文件</a></div></div>
    </div>
    <a class="dl-more">查看更多</a>
  </div>

  <svg class="arrow" width="140" height="240" viewBox="0 0 140 240"><path d="M7 228L115.500 21.500 109 17.500 126 6 126.500 26 120 23.500 9.500 229z" fill="#f63636"/></svg>
  <div class="watermark">CSDN @杨定强</div>
</div>
</body>
</html>
```

FILE: styles.css
```css
* { box-sizing: border-box; }
html, body { margin: 0; padding: 0; }
body { width: 1080px; height: 608px; overflow: hidden; background: #fff; font-family: "Noto Sans CJK SC", "Liberation Sans", sans-serif; color: #333; }
.defs { position: absolute; }
i, em { font-style: normal; }
.screen { position: relative; width: 1080px; height: 608px; display: flex; flex-direction: column; overflow: hidden; filter: blur(.35px); }

/* browser tabs */
.tabstrip { flex: 0 0 22px; display: flex; align-items: center; background: #cdcdcd; }
.strip-btn { width: 33px; padding-left: 12px; display: flex; }
.strip-sep { width: 1px; height: 13px; background: #999; margin-right: 1px; }
.btab { width: 168px; height: 22px; display: flex; align-items: center; padding: 0 4px 0 6px; font-size: 9.200px; color: #666; }
.btab.active { width: 170px; background: #f7f7f7; border-radius: 6px 6px 0 0; color: #444; }
.fav { flex: none; width: 12px; height: 12px; margin-right: 7px; }
.btab-t { flex: 1; white-space: nowrap; overflow: hidden; }
.x { flex: none; width: 8px; height: 8px; margin: 0 7px 0 6px; color: #333; }
.plus { margin-left: 5px; }
.winctl { margin-left: auto; display: flex; gap: 22px; padding-right: 11px; }

/* address row */
.addr { flex: 0 0 25px; display: flex; align-items: center; background: #f7f7f7; }
.nav-ic { width: 134px; display: flex; gap: 18px; padding-left: 14px; align-items: center; }
.url { width: 654px; height: 21px; background: #fff; border-radius: 4px; display: flex; align-items: center; padding-left: 13px; padding-right: 9px; gap: 12px; }
.url-t { flex: 1; font: 9.100px "Open Sans", "Liberation Sans", sans-serif; letter-spacing: .1px; color: #111; white-space: nowrap; overflow: hidden; }
.url-dim { color: #777; }
.url-a { font: 11px "Open Sans", sans-serif; color: #555; margin-right: -1px; }
.url-a sup { font-size: 6px; }
.ext { flex: 1; display: flex; align-items: center; padding-left: 12px; gap: 17px; }
.ext-sep { width: 1px; height: 14px; background: #bbb; margin: 0 -10px 0 -6px; }
.dl { position: relative; display: flex; }
.dl-badge { position: absolute; right: -3px; bottom: -2px; width: 6px; height: 6px; border-radius: 50%; background: #1a78d8; }

/* bookmarks */
.bookmarks { flex: 0 0 25px; display: flex; align-items: center; background: #f7f7f7; border-bottom: 1px solid #e2e2e2; padding-left: 11px; font-size: 8.500px; color: #444; }
.bm { display: flex; align-items: center; gap: 5px; white-space: nowrap; flex: none; }
.bm1 { width: 61px; }
.bm2 { width: 46px; }
.bm3 { width: 45px; }
.bm4 { width: 78px; }
.bm5 { width: 46px; }
.bm6 { width: 62px; }
.bm7 { width: 61px; }
.bm8 { width: 51px; }
.bm9 { width: 45px; }
.bm10 { width: 95px; }
.bm11 { width: 55px; }
.bm12 { width: 63px; }
.bm13 { width: 100px; }
.bm-more { margin-left: auto; margin-right: 13px; }

/* app menu */
.menubar { flex: 0 0 24px; display: flex; align-items: center; background: #fff; padding-left: 3px; }
.logo { flex: none; }
.brand { margin-left: 2px; font: italic 700 12.300px "Noto Sans CJK SC", sans-serif; color: #3f9be8; white-space: nowrap; }
.brand-sub { font-size: 8px; color: #63c0a8; margin: 3px 0 0 1px; }
.menus { display: flex; gap: 11.500px; margin-left: 10px; font-size: 10.500px; color: #444; white-space: nowrap; }
.user { margin-left: auto; padding-right: 8px; font: 8.500px "Liberation Sans", sans-serif; color: #444; }

/* toolbar */
.toolbar { flex: 0 0 24px; display: flex; align-items: center; background: #fff; padding: 0 0 3px 7px; color: #444; border-bottom: 1px solid #eee; }
.toolbar svg { flex: none; width: 13px; height: 13px; margin: 0 4.600px; }
.toolbar .off { color: #d2d2d2; }
.tsep { flex: none; width: 1px; height: 18px; background: #ccc; margin: 0 4.800px; }
.t2d { flex: none; width: 22.200px; text-align: center; font: 9.500px "Liberation Sans", sans-serif; color: #333; }

/* main */
.main { flex: 0 0 460px; height: 460px; min-height: 0; overflow: hidden; display: flex; background: #e6e6e6; }
.leftnav { flex: 0 0 40px; display: flex; flex-direction: column; background: #ececec; }
.ln { flex: 0 0 55.700px; display: flex; flex-direction: column; align-items: center; justify-content: center; gap: 1px; text-align: center; font-size: 8.500px; line-height: 12px; color: #444; padding: 0 1px; }
.ln svg { width: 20px; height: 19px; flex: none; }
.ln.on { background: #fff; color: #2a7de1; }
.ln-trash { margin-top: auto; margin-bottom: 2px; }

.lib { flex: 0 0 103px; display: flex; flex-direction: column; background: #fff; min-height: 0; }
.filter-wrap { flex: 0 0 37px; padding: 8px 8px 0 8px; }
.filter { display: block; width: 87px; height: 18px; border: 1px solid #ddd; border-radius: 3px; padding: 0 4px; font: 8.500px "Noto Sans CJK SC", sans-serif; outline: 0; }
.filter::placeholder { color: #999; }
.lib-body { flex: 1; display: flex; min-height: 0; }
.lib-list { flex: 0 0 93px; overflow: hidden; }
.lib-list h4 { margin: 0; height: 20px; line-height: 20px; padding-left: 8px; font-weight: 400; font-size: 9.500px; color: #444; }
.cells { display: grid; grid-template-columns: 45px 47px; grid-auto-rows: 46px; }
.cell { display: flex; flex-direction: column; align-items: center; justify-content: flex-end; overflow: hidden; border: 1px solid #f1f1f1; border-width: 1px 1px 0 0; padding-bottom: 3px; }
.cell span { font: 9.700px "Liberation Sans", sans-serif; color: #555; white-space: nowrap; }
.sym { width: 34px; height: 12px; margin-bottom: 9px; flex: none; }
.sym-tall { width: 34px; height: 22px; flex: none; margin-bottom: 2px; }
.sbar { display: flex; flex-direction: column; background: #ececec; align-items: center; font-size: 7px; }
.sbar b { flex: none; height: 12px; line-height: 12px; color: #444; font-weight: 400; }
.sb-thumb { display: block; width: 100%; background: #c2c2c2; }
.lib-sb { flex: 0 0 10px; }
.lib-thumb { flex: 0 0 162px; }
.sb-dn { margin-top: auto; }

.gutter { flex: 0 0 4px; display: flex; align-items: center; background: repeating-linear-gradient(#e0e0e0 0 1px, #ededed 1px 2px); }
.handle { display: block; width: 4px; height: 33px; background: #fff; border: 1px solid #888; margin-top: 30px; font-size: 5px; line-height: 31px; overflow: hidden; color: #333; text-align: center; }

.center { flex: 1; min-width: 0; min-height: 0; display: flex; flex-direction: column; background: #e6e6e6; }
.doc-tabs { flex: 0 0 22px; display: flex; background: #dcdcdc; font-size: 10.500px; color: #555; }
.dt { width: 46px; display: flex; align-items: center; padding-left: 5px; border-right: 1px solid #e9e9e9; }
.dt-on { width: 111px; background: #fff; gap: 5px; padding-left: 6px; font-family: "Liberation Sans", sans-serif; font-size: 10.500px; color: #444; border: 0; }
.ruler-top { position: relative; flex: 0 0 15px; display: flex; padding-left: 28px; background-color: #f4f4f4; background-image: repeating-linear-gradient(90deg, #aaa 0 1px, transparent 1px 14.100px); background-size: 100% 3px; background-position: 28px bottom; background-repeat: no-repeat; font: 7.500px/11px "Liberation Sans", sans-serif; color: #888; overflow: hidden; }
.ruler-top span { flex: 0 0 70.500px; padding-left: 2px; border-left: 1px solid #bbb; }
.mark-x { position: absolute; left: 357px; top: 3px; width: 2px; height: 12px; background: #5b9bd9; }
.canvas-row { flex: 1; display: flex; min-height: 0; }
.ruler-left { position: relative; flex: 0 0 14px; display: flex; flex-direction: column; padding-top: 6px; background-color: #f4f4f4; background-image: repeating-linear-gradient(#aaa 0 1px, transparent 1px 14.100px); background-size: 3px 100%; background-position: right 6px; background-repeat: no-repeat; font: 7.500px/11px "Liberation Sans", sans-serif; color: #888; overflow: hidden; }
.ruler-left span { flex: 0 0 70.500px; writing-mode: vertical-rl; transform: rotate(180deg); width: 11px; text-align: right; }
.mark-y { position: absolute; left: 2px; top: 53px; width: 12px; height: 2px; background: #5b9bd9; }
.canvas { position: relative; flex: 1; min-height: 0; background: #000; overflow: hidden; }
.grid { position: absolute; left: 0; top: 0; display: block; }

.fp { position: absolute; }
.ref { position: absolute; font: 9px/10px "Liberation Sans", sans-serif; color: #dcae00; }
.u1 { left: 130px; top: 102px; width: 60px; height: 28px; border: 2px solid #d9aa00; }
.u1 .ref { left: 26px; top: -14px; }
.u1-bar { position: absolute; left: 1px; right: 1px; top: 0; height: 5px; background: #ccc; }
.pad { position: absolute; top: 8px; width: 11px; height: 15px; border-radius: 5.500px / 7.500px; background: radial-gradient(circle, #333 0 2.800px, #999 3.300px); border: 1px solid #a070b0; }
.pad.sq { border-radius: 0; }
.p1 { left: 8px; }
.p2 { left: 23px; }
.p3 { left: 37px; }
.u1-dot { position: absolute; left: 9px; top: 23px; width: 7px; height: 7px; border-radius: 50%; background: #ddd; }
.d1 { left: 252px; top: 115px; width: 12px; height: 10px; border: 1px solid #d9aa00; }
.d1 .ref { left: 3px; top: -11px; }
.d1-pad { position: absolute; top: 2px; width: 6px; height: 4px; background: #f00; }
.dl1 { left: -4px; }
.dl2 { right: -5px; }
.d1-band { position: absolute; left: 3px; top: 0; width: 1px; height: 8px; background: #d9aa00; }

.gutter-r { flex: 0 0 5px; }
.props { flex: 0 0 140px; display: flex; background: #fff; min-height: 0; }
.props-body { flex: 0 0 128px; display: flex; flex-direction: column; background: #fff; }
.band { flex: none; background: #eee; font-size: 10px; color: #444; padding-left: 14px; }
.band-top { height: 23px; background: #d9d9d9; }
.band-title { height: 21px; line-height: 21px; }
.band-grid { height: 22px; }
.band-sec { height: 20px; line-height: 20px; font-size: 11px; padding-left: 5px; margin-bottom: 2px; }
.band-sec em { font-size: 6px; color: #bbb; margin-right: 2px; vertical-align: 1px; }
.band-thin { height: 8px; margin-top: 1px; }
.row { flex: 0 0 21px; display: flex; align-items: center; justify-content: space-between; padding: 0 9px 0 7px; }
.row label { font-size: 8.500px; color: #666; white-space: nowrap; }
.ctl { flex: none; width: 48px; height: 18px; border: 1px solid #e2e2e2; border-radius: 2px; background: #fff; font: 9.300px "Liberation Sans", "Noto Sans CJK SC", sans-serif; color: #444; padding: 0 0 0 4px; outline: 0; }
select.ctl { padding-left: 3px; font-size: 10.500px; }
.black { background: #000; color: #ddd; }
.coords { display: grid; grid-template-columns: 63px 65px; grid-auto-rows: 17px; background: #fff; gap: 0; }
.coords span { background: #ececec; border-bottom: 1px solid #fff; font: 8.500px/16px "Liberation Sans", sans-serif; color: #555; padding-left: 8px; white-space: nowrap; overflow: hidden; }
.coords span:nth-child(even) { border-left: 1px solid #fff; padding-left: 3px; }
.coords span:nth-child(odd) { font-family: "Noto Sans CJK SC", sans-serif; }
.props-sb { flex: 0 0 12px; }
.props-thumb { flex: 0 0 432px; }

/* taskbar */
.taskbar { flex: 0 0 28px; display: flex; align-items: center; background: #18232e; color: #eee; }
.win { margin: 0 11px 0 10px; flex: none; }
.tsearch { width: 241px; height: 28px; background: #f2f2f2; display: flex; align-items: center; gap: 8px; padding-left: 7px; font-size: 11px; color: #444; flex: none; }
.tb-apps { display: flex; margin-left: 0; }
.tb { width: 34.800px; height: 28px; display: flex; align-items: center; justify-content: center; position: relative; }
.tb.run::after { content: ""; position: absolute; left: 1px; right: 1px; bottom: 0; height: 2px; background: #7fc4f0; }
.tb.active { background: #3c4650; }
.tray { margin-left: auto; display: flex; align-items: center; gap: 6px; padding-right: 20px; height: 28px; position: relative; }
.tray-t { font-size: 10px; margin-left: 1px; margin-right: 51px; }
.tray-date { position: absolute; right: 45px; bottom: 2px; font: 8.500px "Liberation Sans", sans-serif; }
.notif { position: relative; display: flex; margin-left: -2px; }
.notif i { position: absolute; right: -4px; bottom: -5px; width: 11px; height: 11px; border-radius: 50%; border: 1px solid #777; font: 7px/9px "Liberation Sans", sans-serif; text-align: center; }

/* PCB tools */
.pcbtools { position: absolute; left: 547px; top: 149px; width: 205px; height: 63px; background: #fafafa; box-shadow: 0 0 2px rgba(0,0,0,.3); }
.pt-head { height: 15px; background: #eee; border-bottom: 1px solid #ddd; display: flex; align-items: center; justify-content: space-between; padding: 0 5px 0 4px; font-size: 9px; color: #444; }
.pt-head i { width: 8px; height: 1px; background: #555; }
.pt-grid { display: grid; grid-template-columns: repeat(10, 19.700px); grid-auto-rows: 20px; padding: 6px 0 0 4px; }
.pt-grid svg { width: 14px; height: 14px; margin: 3px 0 0 2px; fill: none; stroke: #444; }

/* downloads */
.downloads { position: absolute; left: 756px; top: 46px; width: 253px; height: 245px; background: #fff; border-radius: 4px; box-shadow: 0 2px 6px rgba(0,0,0,.28); display: flex; flex-direction: column; }
.dl-head { flex: 0 0 29px; display: flex; align-items: center; gap: 11px; padding: 0 11px; border-bottom: 1px solid #eee; }
.dl-head strong { flex: 1; font-size: 10.500px; font-weight: 700; color: #333; }
.dl-list { flex: 1; display: flex; flex-direction: column; }
.dl-item { display: flex; height: 34.700px; flex: none; padding-left: 11px; gap: 6px; align-items: center; }
.dl-ask { height: 49px; align-items: flex-start; padding-top: 6px; }
.dl-ic { width: 11px; height: 11px; flex: none; }
.dl-ask .dl-ic { margin-top: 5px; }
.dl-name { font: 9.300px/12px "Open Sans", "Noto Sans CJK SC", sans-serif; color: #555; white-space: nowrap; }
.dl-link { display: block; width: fit-content; font-size: 8.500px; line-height: 11px; color: #2b87d8; border-bottom: 1px solid #7fbdf0; }
.dl-btns { display: flex; gap: 6px; margin-top: 4px; }
.dl-btns button { height: 23px; border: 0; border-radius: 1px; background: #efefef; font: 10px "Noto Sans CJK SC", sans-serif; color: #555; padding: 0; }
.btn-open { width: 75px; }
.btn-save { width: 110px; display: flex; align-items: center; justify-content: space-between; padding: 0 9px 0 27px !important; }
.dl-more { position: absolute; left: 11px; top: 224px; font-size: 10px; color: #2b87d8; }

.arrow { position: absolute; left: 780px; top: 117px; pointer-events: none; }
.watermark { position: absolute; left: 965px; top: 580px; font: 14px "Liberation Sans", "Noto Sans CJK SC", sans-serif; letter-spacing: .4px; color: rgba(190,190,190,.7); white-space: nowrap; }
```
